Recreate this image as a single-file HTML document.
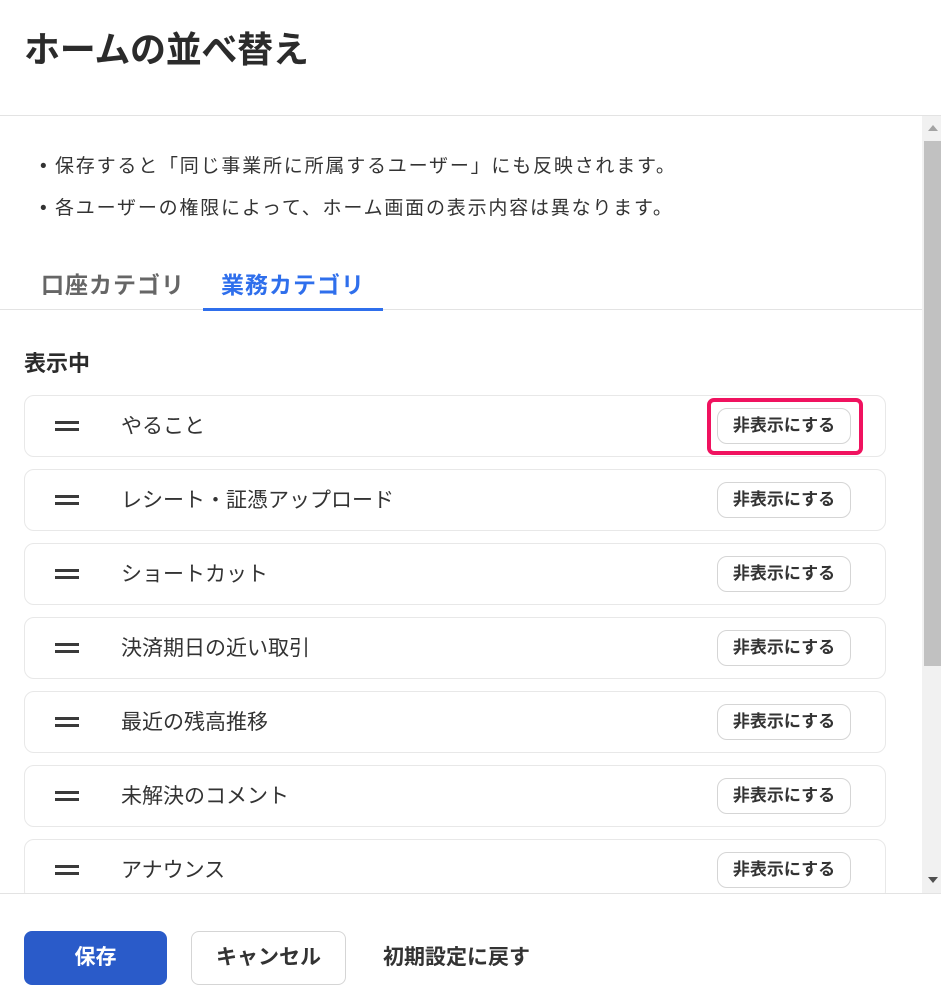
<!DOCTYPE html>
<html><head><meta charset="utf-8">
<style>
*{box-sizing:border-box;margin:0;padding:0}
body{width:941px;height:1005px;overflow:hidden;background:#fff;font-family:"Liberation Sans","Noto Sans CJK JP",sans-serif;color:#333;position:relative}
.title{position:absolute;left:24px;top:28px;font-size:36px;font-weight:bold;line-height:44px;color:#2b2b2b;letter-spacing:-0.3px}
.hline{position:absolute;left:0;width:941px;height:1px;background:#e3e3e3}
.bul{position:absolute;left:40px;font-size:19px;line-height:26px;color:#333;letter-spacing:1.8px}
.bul span{display:inline-block;width:15px;letter-spacing:0}
.tab{position:absolute;top:269px;font-size:23px;font-weight:bold;line-height:32px;letter-spacing:1px}
.row{position:absolute;left:24px;width:862px;height:62px;border:1px solid #e8e8e8;border-radius:10px;background:#fff}
.h{position:absolute;left:30px;width:24px;height:3px;background:#3a3a3a}
.rt{position:absolute;left:96px;top:16px;font-size:21px;line-height:30px;color:#333}
.btn{position:absolute;left:692px;top:12px;width:134px;height:36px;border:1px solid #d5d5d5;border-radius:10px;font-size:17px;font-weight:bold;line-height:34px;text-align:center;color:#333;background:#fff}
</style></head><body>
<div class="title">ホームの並べ替え</div>
<div class="hline" style="top:115px"></div>
<div class="bul" style="top:154px"><span>•</span>保存すると「同じ事業所に所属するユーザー」にも反映されます。</div>
<div class="bul" style="top:196px"><span>•</span>各ユーザーの権限によって、ホーム画面の表示内容は異なります。</div>
<div class="tab" style="left:41px;color:#666">口座カテゴリ</div>
<div class="tab" style="left:221px;color:#2f6fec">業務カテゴリ</div>
<div style="position:absolute;left:0;top:309px;width:922px;height:1px;background:#e3e3e3"></div>
<div style="position:absolute;left:203px;top:308px;width:180px;height:3px;background:#2f6fec"></div>
<div style="position:absolute;left:24px;top:349px;font-size:22px;font-weight:bold;line-height:30px;color:#2b2b2b">表示中</div>

<div class="row" style="top:395px"><div class="h" style="top:25px"></div><div class="h" style="top:32px"></div><div class="rt">やること</div><div class="btn">非表示にする</div></div>
<div class="row" style="top:469px"><div class="h" style="top:25px"></div><div class="h" style="top:32px"></div><div class="rt">レシート・証憑アップロード</div><div class="btn">非表示にする</div></div>
<div class="row" style="top:543px"><div class="h" style="top:25px"></div><div class="h" style="top:32px"></div><div class="rt">ショートカット</div><div class="btn">非表示にする</div></div>
<div class="row" style="top:617px"><div class="h" style="top:25px"></div><div class="h" style="top:32px"></div><div class="rt">決済期日の近い取引</div><div class="btn">非表示にする</div></div>
<div class="row" style="top:691px"><div class="h" style="top:25px"></div><div class="h" style="top:32px"></div><div class="rt">最近の残高推移</div><div class="btn">非表示にする</div></div>
<div class="row" style="top:765px"><div class="h" style="top:25px"></div><div class="h" style="top:32px"></div><div class="rt">未解決のコメント</div><div class="btn">非表示にする</div></div>
<div class="row" style="top:839px"><div class="h" style="top:25px"></div><div class="h" style="top:32px"></div><div class="rt">アナウンス</div><div class="btn">非表示にする</div></div>

<div style="position:absolute;left:707px;top:398px;width:156px;height:57px;border:4px solid #f0125f;border-radius:7px"></div>

<!-- scrollbar -->
<div style="position:absolute;left:922px;top:116px;width:19px;height:778px;background:#f1f1f1"></div>
<div style="position:absolute;left:924px;top:141px;width:17px;height:525px;background:#c1c1c1"></div>
<div style="position:absolute;left:928px;top:125px;width:0;height:0;border-left:5px solid transparent;border-right:5px solid transparent;border-bottom:6px solid #a3a3a3"></div>
<div style="position:absolute;left:928px;top:877px;width:0;height:0;border-left:5px solid transparent;border-right:5px solid transparent;border-top:6px solid #505050"></div>

<!-- footer -->
<div style="position:absolute;left:0;top:893px;width:941px;height:112px;background:#fff;border-top:1px solid #e3e3e3"></div>
<div style="position:absolute;left:24px;top:931px;width:143px;height:54px;background:#2a5bc9;border-radius:8px;color:#fff;font-size:21px;font-weight:bold;line-height:54px;text-align:center">保存</div>
<div style="position:absolute;left:191px;top:931px;width:155px;height:54px;border:1px solid #d5d5d5;border-radius:8px;color:#333;font-size:21px;font-weight:bold;line-height:52px;text-align:center">キャンセル</div>
<div style="position:absolute;left:383px;top:943px;font-size:21px;font-weight:bold;line-height:30px;color:#333">初期設定に戻す</div>
</body></html>
